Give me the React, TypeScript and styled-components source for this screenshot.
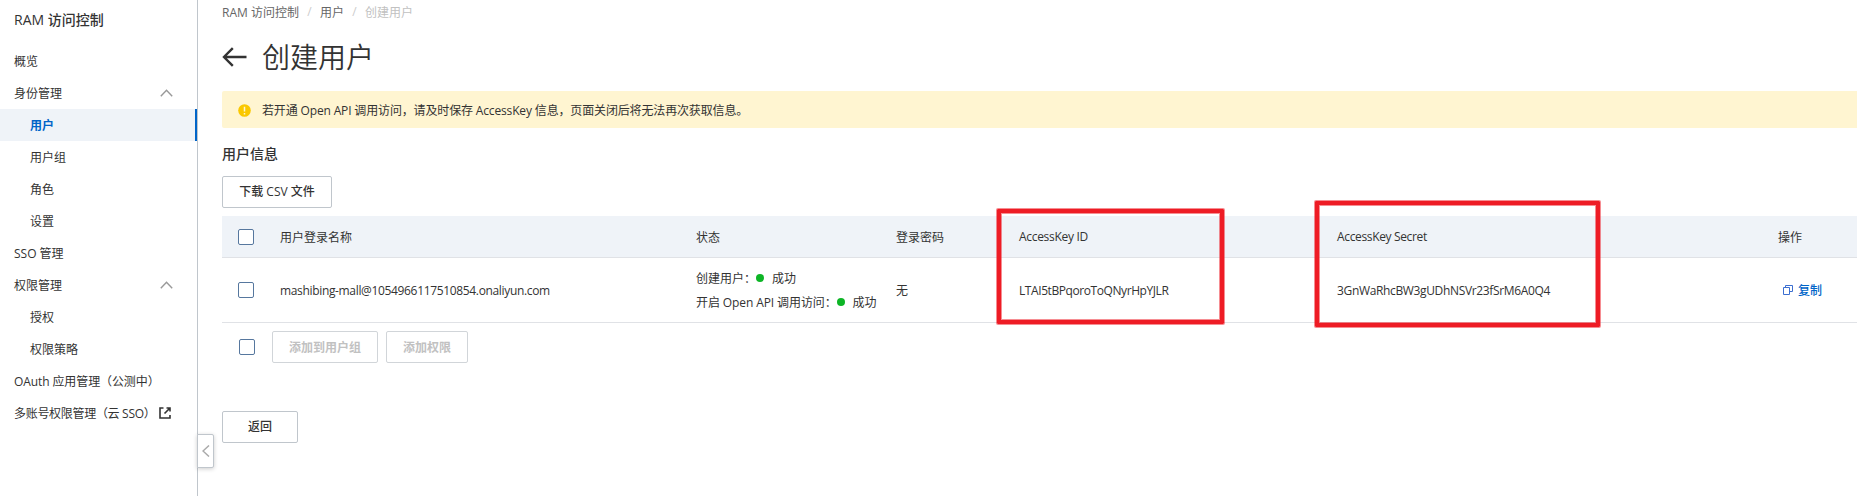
import React from "react";
import styled, { createGlobalStyle } from "styled-components";

const GlobalStyle = createGlobalStyle`
  *, *::before, *::after { box-sizing: border-box; }
  html, body { margin: 0; background: #fff; overflow: hidden; }
  body, button {
    font-family: "Open Sans", "Noto Sans CJK SC", sans-serif;
    font-size: 12px;
    color: #333;
  }
`;

const Page = styled.div`
  display: flex;
  width: 100%;
  height: 496px;
  overflow: hidden;
  position: relative;
`;

const Sidebar = styled.aside`
  flex: none;
  width: 198px;
  border-right: 1px solid #c0c6cc;
  position: relative;
`;

const Brand = styled.div`
  height: 45px;
  padding: 6px 0 0 14px;
  font-size: 14px;
  line-height: 28px;
  font-weight: 500;
`;

const NavItem = styled.div<{ $sub?: boolean; $active?: boolean }>`
  display: flex;
  align-items: center;
  height: 32px;
  padding: 0 24px 0 ${(p) => (p.$sub ? 30 : 14)}px;
  border-right: 2px solid ${(p) => (p.$active ? "#0064c8" : "transparent")};
  background: ${(p) => (p.$active ? "#eff3f8" : "transparent")};
  color: ${(p) => (p.$active ? "#0064c8" : "#333")};
  font-weight: ${(p) => (p.$active ? 600 : 400)};
  white-space: nowrap;
`;

const Chevron = styled.svg`
  margin-left: auto;
  margin-right: -2px;
  flex: none;
`;

const ExternalSvg = styled.svg`
  margin-left: 4px;
  flex: none;
`;

const Handle = styled.div`
  position: absolute;
  left: 197px;
  top: 434px;
  width: 17px;
  height: 34px;
  display: flex;
  align-items: center;
  justify-content: center;
  border: 1px solid #c0c6cc;
  border-radius: 0 2px 2px 0;
  background: #fff;
  box-shadow: 0 1px 4px rgba(0, 0, 0, 0.2);
`;

const Main = styled.main`
  flex: 1;
  min-width: 0;
  padding-left: 24px;
`;

const Breadcrumb = styled.nav`
  display: flex;
  align-items: center;
  height: 23px;
  color: #666;
`;

const Slash = styled.span`
  width: 21px;
  text-align: center;
  color: #ccc;
`;

const Muted = styled.span`
  color: #c1c1c1;
`;

const Heading = styled.h1`
  display: flex;
  align-items: center;
  height: 68px;
  margin: 0;
  font-size: 28px;
  font-weight: 350;
  line-height: 40px;

  svg { margin-right: 15px; flex: none; }
`;

const Alert = styled.div`
  display: flex;
  align-items: center;
  height: 37px;
  padding-left: 16px;
  background: #fff5d1;
  border-radius: 2px 0 0 2px;

  svg { margin-right: 11px; position: relative; top: 1px; }
`;

const SectionTitle = styled.h2`
  margin: 15px 0 11px;
  height: 22px;
  font-size: 14px;
  font-weight: 500;
  line-height: 22px;
`;

const Button = styled.button<{ $width: number }>`
  display: block;
  width: ${(p) => p.$width}px;
  height: 32px;
  padding: 0 0 2px;
  border: 1px solid #c0c6cc;
  border-radius: 2px;
  background: #fff;
  font-weight: 500;
  white-space: nowrap;

  &:disabled {
    padding-bottom: 0;
    border-color: #d1d5d9;
    color: #c1c1c1;
    font-weight: 600;
  }
`;

const Table = styled.div`
  margin-top: 8px;
`;

const columns = "58px 416px 200px 123px 318px 441px 1fr";

const HeadRow = styled.div`
  display: grid;
  grid-template-columns: ${columns};
  align-items: center;
  height: 42px;
  background: #eff3f8;
  border-bottom: 1px solid #e0e2e6;
`;

const BodyRow = styled(HeadRow)`
  height: 65px;
  background: #fff;
`;

const Check = styled.span<{ $left?: number }>`
  display: block;
  flex: none;
  width: 16px;
  height: 16px;
  margin-left: ${(p) => p.$left ?? 16}px;
  border: 1px solid #56779e;
  border-radius: 2px;
  background: #fff;
`;

const Cell = styled.div<{ $spacing?: number }>`
  white-space: nowrap;
  letter-spacing: ${(p) => p.$spacing ?? 0}px;
`;

const Text = styled.span<{ $spacing?: number }>`
  white-space: nowrap;
  letter-spacing: ${(p) => p.$spacing ?? 0}px;
`;

const StatusLine = styled.div`
  display: flex;
  align-items: center;
  height: 24px;
`;

const Dot = styled.i`
  width: 8px;
  height: 8px;
  margin: 0 8px 0 0;
  border-radius: 50%;
  background: #0db526;
`;

const CopyLink = styled.a`
  display: flex;
  align-items: center;
  gap: 5px;
  padding-left: 5px;
  color: #0064c8;
  font-weight: 500;
`;

const Footer = styled.div`
  display: flex;
  align-items: center;
  gap: 8px;
  padding-top: 8px;
  margin-bottom: 48px;

  > span { margin-right: 9px; }
`;

const Mark = styled.div<{ $x: number; $y: number; $w: number; $h: number }>`
  position: absolute;
  left: ${(p) => p.$x}px;
  top: ${(p) => p.$y}px;
  width: ${(p) => p.$w}px;
  height: ${(p) => p.$h}px;
  border: 4px solid #ee1c25;
  border-radius: 1px;
  box-shadow: 0 0 0 1px rgba(238, 28, 37, 0.5), inset 0 0 0 1px rgba(238, 28, 37, 0.5);
  pointer-events: none;
`;

const Up = () => (
  <Chevron width="13" height="8" viewBox="0 0 13 8" fill="none" stroke="#999" strokeWidth="1.4">
    <path d="M0.8 7.2 6.5 1.2 12.2 7.2" />
  </Chevron>
);

const External = () => (
  <ExternalSvg width="12" height="12" viewBox="0 0 12 12" fill="none" stroke="#333" strokeWidth="1.6">
    <path d="M4.500 1H1v10h10V8M7.500 1H11v3.500M11 1 5.500 6.500" />
  </ExternalSvg>
);

type Item = { label: string; sub?: boolean; active?: boolean; open?: boolean; external?: boolean; spacing?: number };

const items: Item[] = [
  { label: "概览" },
  { label: "身份管理", open: true },
  { label: "用户", sub: true, active: true },
  { label: "用户组", sub: true },
  { label: "角色", sub: true },
  { label: "设置", sub: true },
  { label: "SSO 管理" },
  { label: "权限管理", open: true },
  { label: "授权", sub: true },
  { label: "权限策略", sub: true },
  { label: "OAuth 应用管理（公测中）", spacing: -0.1 },
  { label: "多账号权限管理（云 SSO）", external: true, spacing: -0.3 },
];

export default function App() {
  return (
    <>
      <GlobalStyle />
      <Page>
        <Sidebar>
          <Brand>RAM 访问控制</Brand>
          {items.map((it) => (
            <NavItem key={it.label} $sub={it.sub} $active={it.active}>
              <Text $spacing={it.spacing}>{it.label}</Text>
              {it.open && <Up />}
              {it.external && <External />}
            </NavItem>
          ))}
        </Sidebar>
        <Main>
          <Breadcrumb>
            <Text>RAM 访问控制</Text>
            <Slash>/</Slash>
            <span>用户</span>
            <Slash>/</Slash>
            <Muted>创建用户</Muted>
          </Breadcrumb>
          <Heading>
            <svg width="25" height="20" viewBox="0 0 25 20" fill="none" stroke="#333" strokeWidth="2.4">
              <path d="M24.500 10H2M10.800 1.200 2 10l8.800 8.800" />
            </svg>
            创建用户
          </Heading>
          <Alert>
            <svg width="13" height="13" viewBox="0 0 13 13">
              <circle cx="6.500" cy="6.500" r="6.300" fill="#fac800" />
              <path d="M6.500 2.800v4.700M6.500 8.900v1.500" stroke="#fff5d1" strokeWidth="1.500" />
            </svg>
            <Text $spacing={-0.15}>若开通 Open API 调用访问，请及时保存 AccessKey 信息，页面关闭后将无法再次获取信息。</Text>
          </Alert>
          <SectionTitle>用户信息</SectionTitle>
          <Button $width={110}>下载 CSV 文件</Button>
          <Table>
            <HeadRow>
              <Check />
              <Cell>用户登录名称</Cell>
              <Cell>状态</Cell>
              <Cell>登录密码</Cell>
              <Cell $spacing={-0.3}>AccessKey ID</Cell>
              <Cell $spacing={-0.35}>AccessKey Secret</Cell>
              <Cell>操作</Cell>
            </HeadRow>
            <BodyRow>
              <Check />
              <Cell $spacing={-0.34}>mashibing-mall@1054966117510854.onaliyun.com</Cell>
              <div>
                <StatusLine><Text>创建用户：</Text><Dot />成功</StatusLine>
                <StatusLine><Text $spacing={-0.1}>开启 Open API 调用访问：</Text><Dot />成功</StatusLine>
              </div>
              <Cell>无</Cell>
              <Cell $spacing={-0.42}>LTAI5tBPqoroToQNyrHpYJLR</Cell>
              <Cell $spacing={-0.35}>3GnWaRhcBW3gUDhNSVr23fSrM6A0Q4</Cell>
              <CopyLink>
                <svg width="10" height="10" viewBox="0 0 10 10" fill="none" stroke="#3c6fd0">
                  <path d="M.5 2.500h6v7h-6zM2.500 2.500v-2h7v6h-3" />
                </svg>
                复制
              </CopyLink>
            </BodyRow>
          </Table>
          <Footer>
            <Check $left={17} />
            <Button $width={106} disabled>添加到用户组</Button>
            <Button $width={82} disabled>添加权限</Button>
          </Footer>
          <Button $width={76}>返回</Button>
        </Main>
        <Handle>
          <svg width="8" height="12" viewBox="0 0 8 12" fill="none" stroke="#aaa" strokeWidth="1.500">
            <path d="M7 .5 1 6l6 5.500" />
          </svg>
        </Handle>
        <Mark $x={997} $y={209} $w={227} $h={115} />
        <Mark $x={1315} $y={201} $w={285} $h={126} />
      </Page>
    </>
  );
}
